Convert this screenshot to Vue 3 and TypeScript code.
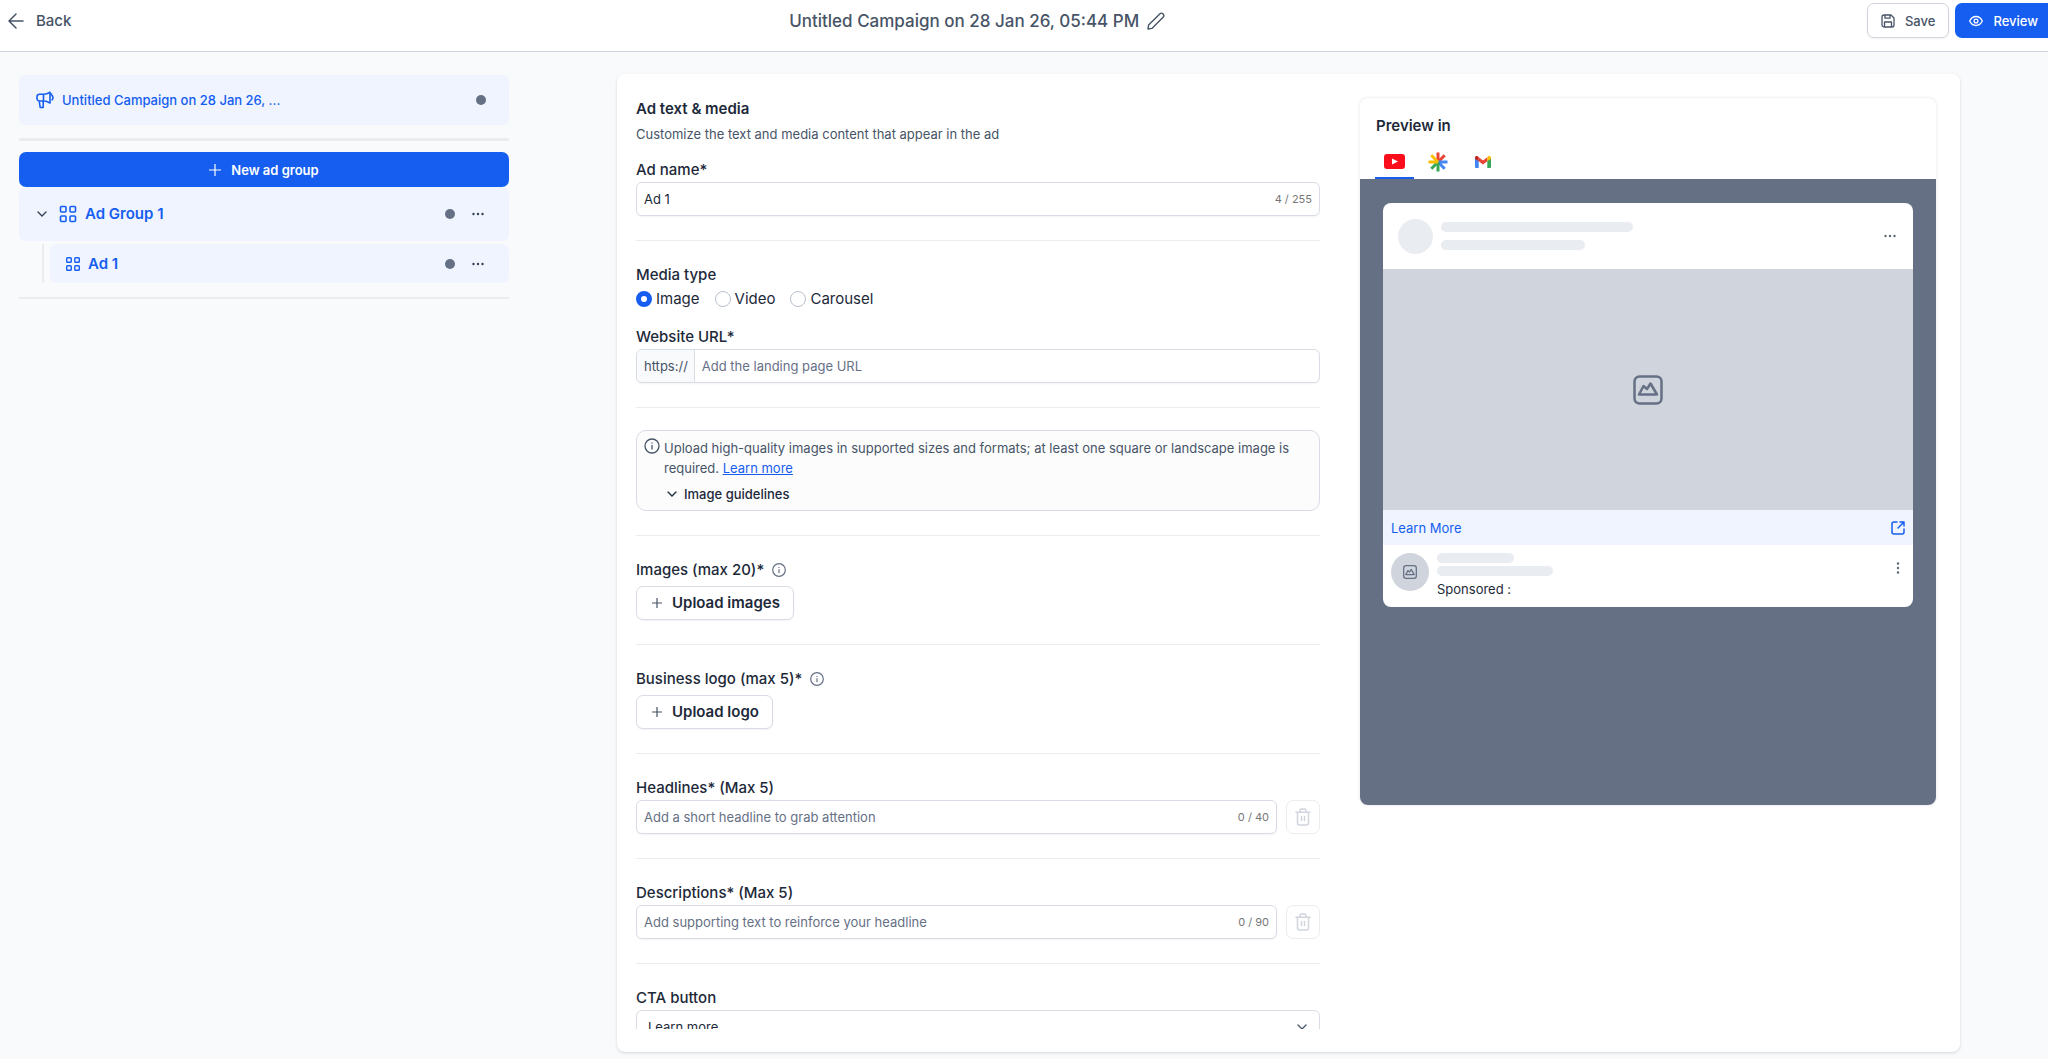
<script setup lang="ts">
import { ref } from 'vue'

const campaignName = 'Untitled Campaign on 28 Jan 26, 05:44 PM'
const campaignShort = 'Untitled Campaign on 28 Jan 26, ...'

const adName = ref('Ad 1')
const mediaTypes = ['Image', 'Video', 'Carousel']
const mediaType = ref('Image')
const url = ref('')
const headline = ref('')
const description = ref('')
const cta = ref('Learn more')
</script>

<template>
  <div class="app">
    <header class="topbar">
      <button type="button" class="back">
        <svg width="16" height="16" viewBox="0 0 16 16" fill="none" stroke="currentColor" stroke-width="1.5" stroke-linecap="round" stroke-linejoin="round"><path d="M15 8H1M8 1 1 8l7 7" /></svg>
        Back
      </button>
      <div class="title">
        <h1>{{ campaignName }}</h1>
        <button type="button" class="plain" aria-label="Rename campaign">
          <svg width="18" height="18" viewBox="0 0 18 18" fill="none" stroke="currentColor" stroke-width="1.4" stroke-linejoin="round"><path d="M1 17l.6-3.9L13 1.700a1.900 1.900 0 0 1 2.700 0l.6.6a1.900 1.900 0 0 1 0 2.700L4.900 16.400z" /></svg>
        </button>
      </div>
      <div class="actions">
        <button type="button" class="btn save">
          <svg width="14" height="14" viewBox="0 0 14 14" fill="none" stroke="currentColor" stroke-width="1.300" stroke-linejoin="round"><path d="M3 1h7l3 3v7a2 2 0 0 1-2 2H3a2 2 0 0 1-2-2V3a2 2 0 0 1 2-2zM4 1v3.200h5V1M3.500 13V8h7v5" /></svg>
          Save
        </button>
        <button type="button" class="btn review">
          <svg width="14" height="14" viewBox="0 0 14 14" fill="none" stroke="currentColor" stroke-width="1.300"><path d="M.7 7C2 4.200 4.200 2.500 7 2.500S12 4.200 13.300 7C12 9.800 9.800 11.500 7 11.500S2 9.800.7 7z" /><circle cx="7" cy="7" r="1.900" /></svg>
          Review
        </button>
      </div>
    </header>

    <div class="body">
      <aside class="sidebar">
        <a href="#" class="row campaign">
          <svg width="18" height="18" viewBox="0 0 18 18" fill="none" stroke="currentColor" stroke-width="1.600" stroke-linejoin="round" stroke-linecap="round"><path d="M8 3.200H3.500A2.500 2.500 0 0 0 1 5.700v1.800A2.500 2.500 0 0 0 3.500 10H8c2 0 4 .8 6 2V1.200c-2 1.200-4 2-6 2zM7.500 3.200V10M3.200 10l1 6.500h3V10M14 3.800l1.500-.8M16 4.500c1.300 1 1.300 3.300 0 4.300" /></svg>
          <span class="grow">{{ campaignShort }}</span>
          <i class="dot"></i>
        </a>
        <hr class="rule thick" />
        <button type="button" class="btn new">
          <svg width="12" height="12" viewBox="0 0 12 12" stroke="currentColor" stroke-width="1.200"><path d="M6 0v12M0 6h12" /></svg>
          New ad group
        </button>
        <div class="row group">
          <svg class="ink" width="10" height="6" viewBox="0 0 10 6" fill="none" stroke="currentColor" stroke-width="1.300" stroke-linecap="round"><path d="M1 1l4 4 4-4" /></svg>
          <svg width="18" height="18" viewBox="0 0 18 18" fill="none" stroke="currentColor" stroke-width="1.600"><rect x="1.500" y="1.500" width="5.500" height="5.500" rx="1" /><rect x="11" y="1.500" width="5.500" height="5.500" rx="1" /><rect x="1.500" y="11" width="5.500" height="5.500" rx="1" /><rect x="11" y="11" width="5.500" height="5.500" rx="1" /></svg>
          <a href="#" class="grow big">Ad Group 1</a>
          <i class="dot"></i>
          <button type="button" class="plain ink" aria-label="Ad group actions">
            <svg width="12" height="4" viewBox="0 0 12 4" fill="currentColor"><circle cx="1.500" cy="2" r="1.200" /><circle cx="6" cy="2" r="1.200" /><circle cx="10.500" cy="2" r="1.200" /></svg>
          </button>
        </div>
        <div class="branch">
          <div class="row ad">
            <svg width="14" height="14" viewBox="1 1 16 16" fill="none" stroke="currentColor" stroke-width="1.600"><rect x="1.800" y="1.800" width="5.200" height="5.200" rx="1" /><rect x="11" y="1.800" width="5.200" height="5.200" rx="1" /><rect x="1.800" y="11" width="5.200" height="5.200" rx="1" /><rect x="11" y="11" width="5.200" height="5.200" rx="1" /></svg>
            <a href="#" class="grow big">Ad 1</a>
            <i class="dot"></i>
            <button type="button" class="plain ink" aria-label="Ad actions">
              <svg width="12" height="4" viewBox="0 0 12 4" fill="currentColor"><circle cx="1.500" cy="2" r="1.200" /><circle cx="6" cy="2" r="1.200" /><circle cx="10.500" cy="2" r="1.200" /></svg>
            </button>
          </div>
        </div>
        <hr class="rule" />
      </aside>

      <main class="card">
        <form class="form" @submit.prevent>
          <section class="first">
            <h2>Ad text &amp; media</h2>
            <p class="hint">Customize the text and media content that appear in the ad</p>
            <label class="label" for="ad-name">Ad name*</label>
            <div class="field">
              <input id="ad-name" v-model="adName" type="text" maxlength="255" />
              <span class="count">{{ adName.length }} / 255</span>
            </div>
          </section>

          <section>
            <span id="media-label" class="label">Media type</span>
            <div class="radios" role="radiogroup" aria-labelledby="media-label">
              <label v-for="t in mediaTypes" :key="t">
                <input v-model="mediaType" type="radio" name="media" :value="t" />{{ t }}
              </label>
            </div>
            <label class="label" for="url">Website URL*</label>
            <div class="field">
              <span class="prefix">https://</span>
              <input id="url" v-model="url" type="text" placeholder="Add the landing page URL" />
            </div>
          </section>

          <section>
            <div class="notice">
              <svg width="16" height="16" viewBox="0 0 16 16" fill="none" stroke="currentColor" stroke-width="1.300" stroke-linecap="round"><circle cx="8" cy="8" r="7" /><path d="M8 7.500v3.500M8 5v.1" /></svg>
              <div>
                <p>Upload high-quality images in supported sizes and formats; at least one square or landscape image is required. <a href="#">Learn more</a></p>
                <button type="button" class="guide">
                  <svg width="10" height="6" viewBox="0 0 10 6" fill="none" stroke="currentColor" stroke-width="1.300" stroke-linecap="round"><path d="M1 1l4 4 4-4" /></svg>
                  Image guidelines
                </button>
              </div>
            </div>
          </section>

          <section v-for="u in [['Images (max 20)*', 'Upload images'], ['Business logo (max 5)*', 'Upload logo']]" :key="u[1]">
            <div class="label up">
              {{ u[0] }}
              <svg width="14" height="14" viewBox="0 0 14 14" fill="none" stroke="currentColor" stroke-width="1.200" stroke-linecap="round"><circle cx="7" cy="7" r="6.300" /><path d="M7 6.700v3M7 4.300v.1" /></svg>
            </div>
            <button type="button" class="btn upload">
              <svg width="10" height="10" viewBox="0 0 10 10" stroke="currentColor" stroke-width="1.200"><path d="M5 0v10M0 5h10" /></svg>
              {{ u[1] }}
            </button>
          </section>

          <section>
            <label class="label" for="headline">Headlines* (Max 5)</label>
            <div class="line">
              <div class="field">
                <input id="headline" v-model="headline" type="text" placeholder="Add a short headline to grab attention" />
                <span class="count">{{ headline.length }} / 40</span>
              </div>
              <button type="button" class="trash" aria-label="Remove headline" disabled>
                <svg width="16" height="18" viewBox="0 0 16 18" fill="none" stroke="currentColor" stroke-width="1.500" stroke-linecap="round" stroke-linejoin="round"><path d="M1 4.300h14M5 4V2.500A1.500 1.500 0 0 1 6.500 1h3A1.500 1.500 0 0 1 11 2.500V4M2.500 4.500V15a2 2 0 0 0 2 2h7a2 2 0 0 0 2-2V4.500M6.500 8.500v4M9.500 8.500v4" /></svg>
              </button>
            </div>
          </section>

          <section>
            <label class="label" for="description">Descriptions* (Max 5)</label>
            <div class="line">
              <div class="field">
                <input id="description" v-model="description" type="text" placeholder="Add supporting text to reinforce your headline" />
                <span class="count">{{ description.length }} / 90</span>
              </div>
              <button type="button" class="trash" aria-label="Remove description" disabled>
                <svg width="16" height="18" viewBox="0 0 16 18" fill="none" stroke="currentColor" stroke-width="1.500" stroke-linecap="round" stroke-linejoin="round"><path d="M1 4.300h14M5 4V2.500A1.500 1.500 0 0 1 6.500 1h3A1.500 1.500 0 0 1 11 2.500V4M2.500 4.500V15a2 2 0 0 0 2 2h7a2 2 0 0 0 2-2V4.500M6.500 8.500v4M9.500 8.500v4" /></svg>
              </button>
            </div>
          </section>

          <section class="last">
            <label class="label" for="cta">CTA button</label>
            <div class="field">
              <select id="cta" v-model="cta">
                <option>Learn more</option>
                <option>Sign up</option>
              </select>
              <svg class="caret" width="10" height="6" viewBox="0 0 10 6" fill="none" stroke="currentColor" stroke-width="1.300" stroke-linecap="round"><path d="M1 1l4 4 4-4" /></svg>
            </div>
          </section>
        </form>

        <aside class="preview">
          <h2>Preview in</h2>
          <nav class="tabs">
            <button type="button" class="tab active" aria-label="YouTube">
              <svg width="21" height="15" viewBox="0 0 21 15"><rect width="21" height="15" rx="3" fill="#fc0d1b" /><path d="M8 4.500v6l6-3z" fill="#fff" /></svg>
            </button>
            <button type="button" class="tab" aria-label="Discover">
              <svg width="20" height="20" viewBox="-10 -10 20 20" stroke-width="3"><path d="M0 0V-9.500" stroke="#ea4335" /><path d="M0 0 6.700-6.700" stroke="#ea4335" /><path d="M0 0 6.700 6.700" stroke="#4285f4" /><path d="M0 0H9.500" stroke="#4285f4" /><path d="M0 0V9.500" stroke="#34a853" /><path d="M0 0-6.700 6.700" stroke="#34a853" /><path d="M0 0-6.700-6.700" stroke="#fbbc04" /><path d="M0 0H-9.500" stroke="#fbbc04" /></svg>
            </button>
            <button type="button" class="tab" aria-label="Gmail">
              <svg width="16" height="12" viewBox="0 0 16 12"><path d="M0 2v9a1 1 0 0 0 1 1h2.700V4.500z" fill="#4285f4" /><path d="M16 2v9a1 1 0 0 1-1 1h-2.700V4.500z" fill="#34a853" /><path d="M3.700 1.200 8 4.500l4.300-3.300v4L8 8.500 3.700 5.200z" fill="#ea4335" /><path d="M0 1.700C0 .2 1.700-.4 2.900.5l.8.6v4.100L0 2.800z" fill="#c5221f" /><path d="M16 1.700C16 .2 14.300-.4 13.100.5l-.8.6v4.100L16 2.800z" fill="#fbbc04" /></svg>
            </button>
          </nav>
          <div class="stage">
            <article class="mock">
              <div class="mock-head">
                <i class="avatar"></i>
                <div class="bars"><i class="bar w1"></i><i class="bar w2"></i></div>
                <svg class="more" width="12" height="4" viewBox="0 0 12 4" fill="currentColor"><circle cx="1.500" cy="2" r="1.200" /><circle cx="6" cy="2" r="1.200" /><circle cx="10.500" cy="2" r="1.200" /></svg>
              </div>
              <div class="picture">
                <svg width="30" height="30" viewBox="0 0 30 30" fill="none" stroke="currentColor" stroke-width="2.500" stroke-linejoin="round"><rect x="1.500" y="1.500" width="27" height="27" rx="5" /><path d="M6 19.500 10.500 11l3.500 3 3.500-5.500 6.500 11z" /></svg>
              </div>
              <a href="#" class="cta">
                Learn More
                <svg width="14" height="14" viewBox="0 0 14 14" fill="none" stroke="currentColor" stroke-width="1.500" stroke-linecap="round" stroke-linejoin="round"><path d="M6 1H3a2 2 0 0 0-2 2v8a2 2 0 0 0 2 2h8a2 2 0 0 0 2-2V8M9 1h4v4M13 1 7 7" /></svg>
              </a>
              <div class="mock-foot">
                <span class="logo">
                  <svg width="14" height="14" viewBox="0 0 30 30" fill="none" stroke="currentColor" stroke-width="2.700" stroke-linejoin="round"><rect x="1.500" y="1.500" width="27" height="27" rx="5" /><path d="M6 20.500 10.500 12l3.500 3 3.500-5.500 6.500 11z" /></svg>
                </span>
                <div class="lines"><i class="bar s1"></i><i class="bar s2"></i><span>Sponsored :</span></div>
                <svg class="kebab" width="4" height="12" viewBox="0 0 4 12" fill="currentColor"><circle cx="2" cy="1.500" r="1.200" /><circle cx="2" cy="6" r="1.200" /><circle cx="2" cy="10.500" r="1.200" /></svg>
              </div>
            </article>
          </div>
        </aside>
      </main>
    </div>
  </div>
</template>

<style>
body {
  margin: 0;
  background: #f9fafb;
}
</style>

<style scoped>
* {
  box-sizing: border-box;
}
.app {
  display: flex;
  flex-direction: column;
  height: 100vh;
  overflow: hidden;
  font: 400 13px/20px Inter, "Liberation Sans", sans-serif;
  color: #1d2939;
  background: #f9fafb;
}
button,
input,
select {
  font: inherit;
  color: inherit;
}
button {
  padding: 0;
  border: 0;
  background: none;
}
h1,
h2,
p {
  margin: 0;
}
svg {
  flex: none;
  display: block;
}
a {
  color: inherit;
  text-decoration: none;
}
.topbar {
  display: flex;
  justify-content: space-between;
  padding: 3px 0 12px 8px;
  background: #fff;
  border-bottom: 1px solid #d0d5dd;
  color: #475467;
}
.back {
  display: flex;
  align-items: center;
  gap: 12px;
  height: 36px;
  padding-right: 16px;
  font-weight: 500;
  font-size: 15px;
}
.title {
  display: flex;
  align-items: center;
  gap: 8px;
  height: 36px;
}
h1 {
  font-size: 17px;
  line-height: 24px;
  font-weight: 500;
}
.actions {
  display: flex;
  gap: 6px;
}
.btn {
  display: flex;
  align-items: center;
  gap: 10px;
  height: 35px;
  border-radius: 7px;
  font-weight: 500;
}
.save {
  padding: 0 13px;
  border: 1px solid #d0d5dd;
  background: #fff;
  box-shadow: 0 1px 2px rgba(16, 24, 40, 0.05);
}
.review {
  padding: 0 10px 0 14px;
  border-radius: 7px 0 0 7px;
  background: #155eef;
  color: #fff;
}
.body {
  display: flex;
  flex: 1;
  min-height: 0;
  padding: 22px 88px 7px 19px;
  gap: 108px;
}
.sidebar {
  flex: 0 0 490px;
  padding-top: 1px;
  color: #155eef;
  font-weight: 500;
}
.row {
  display: flex;
  align-items: center;
  background: #eff4ff;
  border-radius: 6px;
}
.grow {
  flex: 1;
}
.campaign {
  height: 50px;
  gap: 8px;
  padding: 0 23px 0 17px;
}
.dot {
  width: 10px;
  height: 10px;
  border-radius: 50%;
  background: #667085;
}
.rule {
  margin: 14px 0 0;
  border: 0;
  border-top: 2px solid #eaecf0;
}
.thick {
  margin: 13px 0 11px;
  border-width: 3px;
}
.new {
  width: 100%;
  justify-content: center;
  background: #155eef;
  color: #fff;
  font-weight: 600;
}
.ink {
  color: #344054;
}
.group {
  height: 54px;
  padding: 0 25px 0 18px;
}
.group > svg + svg {
  margin: 0 8px 0 12px;
}
.big {
  font-size: 15px;
  font-weight: 600;
}
.row .plain {
  margin-left: 17px;
}
.branch {
  margin: 3px 0 0 23px;
  padding-left: 6px;
  border-left: 2px solid #eaecf0;
}
.ad {
  height: 39px;
  padding: 0 25px 0 16px;
}
.ad > svg {
  margin-right: 8px;
}
.card {
  flex: 1;
  display: flex;
  gap: 40px;
  padding: 0 24px 23px 19px;
  background: #fff;
  border-radius: 8px;
  box-shadow: 0 1px 3px rgba(16, 24, 40, 0.16);
}
.form {
  flex: 19 1 0;
  min-width: 0;
  overflow-y: auto;
  scrollbar-width: none;
}
section {
  padding: 22px 0 24px;
  border-bottom: 1px solid #eaecf0;
}
.first {
  padding-top: 24px;
}
.last {
  border: 0;
}
h2 {
  font-size: 15px;
  line-height: 22px;
  font-weight: 600;
}
.hint {
  margin: 4px 0 14px;
  color: #475467;
}
.label {
  display: block;
  font-size: 15px;
  line-height: 24px;
  font-weight: 500;
}
.up {
  display: flex;
  align-items: center;
  gap: 8px;
  margin-bottom: 4px;
}
.up svg {
  color: #667085;
}
.field {
  display: flex;
  align-items: center;
  flex: 1;
  height: 34px;
  border: 1px solid #d8dce4;
  border-radius: 6px;
  background: #fff;
  box-shadow: 0 1px 2px rgba(16, 24, 40, 0.05);
  overflow: hidden;
}
.field input {
  flex: 1;
  min-width: 0;
  height: 100%;
  padding: 0 7px;
  border: 0;
  outline: 0;
  background: none;
}
.field input::placeholder {
  color: #667085;
}
.count {
  padding-right: 7px;
  font-size: 11px;
  color: #767676;
}
.prefix {
  height: 100%;
  padding: 0 6px 0 7px;
  line-height: 32px;
  border-right: 1px solid #d8dce4;
  background: #f9fafb;
  color: #475467;
}
.radios {
  display: flex;
  gap: 15px;
  margin-bottom: 14px;
}
.radios label {
  display: flex;
  align-items: center;
  gap: 4px;
  font-size: 15px;
  line-height: 24px;
}
.radios input {
  appearance: none;
  width: 16px;
  height: 16px;
  margin: 0;
  border: 1px solid #b9c0cc;
  border-radius: 50%;
}
.radios input:checked {
  border: 5px solid #155eef;
}
.notice {
  display: flex;
  gap: 4px;
  padding: 7px 7px 6px;
  border: 1px solid #d8dce4;
  border-radius: 10px;
  background: #fcfcfd;
  color: #475467;
}
.notice a {
  color: #155eef;
  text-decoration: underline;
}
.guide {
  display: flex;
  align-items: center;
  gap: 7px;
  height: 20px;
  margin: 6px 0 0 3px;
  font-weight: 500;
  color: #1d2939;
}
.upload {
  padding: 0 13px 0 15px;
  height: 34px;
  border: 1px solid #d8dce4;
  background: #fff;
  box-shadow: 0 1px 2px rgba(16, 24, 40, 0.05);
  font-size: 15px;
  font-weight: 600;
}
.upload svg {
  color: #475467;
}
.line {
  display: flex;
  gap: 9px;
}
.trash {
  display: grid;
  place-items: center;
  width: 34px;
  height: 34px;
  border: 1px solid #eaecf0;
  border-radius: 7px;
  color: #d0d5dd;
}
.field select {
  flex: 1;
  height: 100%;
  padding: 0 11px;
  border: 0;
  outline: 0;
  appearance: none;
  background: none;
}
.caret {
  margin-right: 12px;
  color: #475467;
}
.preview {
  flex: 16 1 0;
  min-width: 0;
  align-self: flex-start;
  margin-top: 24px;
  padding-top: 17px;
  border-radius: 8px;
  box-shadow: 0 0 3px rgba(16, 24, 40, 0.14);
  overflow: hidden;
}
.preview h2 {
  padding: 0 16px;
}
.tabs {
  display: flex;
  gap: 4px;
  height: 42px;
  padding: 9px 15px 0;
}
.tab {
  display: grid;
  place-items: center;
  width: 39px;
  border-bottom: 2px solid transparent;
}
.tab:last-child {
  width: 43px;
}
.active {
  border-color: #155eef;
}
.stage {
  min-height: 626px;
  padding: 24px 23px;
  background: #667085;
}
.mock {
  background: #fff;
  border-radius: 8px;
  overflow: hidden;
}
.mock-head {
  display: flex;
  align-items: center;
  gap: 8px;
  height: 66px;
  padding: 0 17px 0 15px;
}
.avatar {
  width: 35px;
  height: 35px;
  border-radius: 50%;
  background: #e9ecf1;
}
.bars {
  display: flex;
  flex-direction: column;
  gap: 8px;
  flex: 1;
}
.bar {
  height: 10px;
  border-radius: 5px;
  background: #e9ecf1;
}
.w1 {
  width: 192px;
}
.w2 {
  width: 144px;
}
.more,
.kebab {
  color: #5c6b73;
}
.picture {
  display: grid;
  place-items: center;
  height: 241px;
  background: #d0d5dd;
  color: #667085;
}
.cta {
  display: flex;
  align-items: center;
  justify-content: space-between;
  height: 35px;
  padding: 0 8px;
  background: #eff4ff;
  color: #155eef;
}
.mock-foot {
  display: flex;
  gap: 8px;
  height: 62px;
  padding: 8px 13px 0 8px;
}
.logo {
  display: grid;
  place-items: center;
  width: 38px;
  height: 38px;
  border-radius: 50%;
  background: #d0d5dd;
  color: #667085;
}
.lines {
  display: flex;
  flex-direction: column;
  gap: 3px;
  flex: 1;
}
.s1 {
  width: 77px;
}
.s2 {
  width: 116px;
}
.kebab {
  margin-top: 9px;
}
</style>
